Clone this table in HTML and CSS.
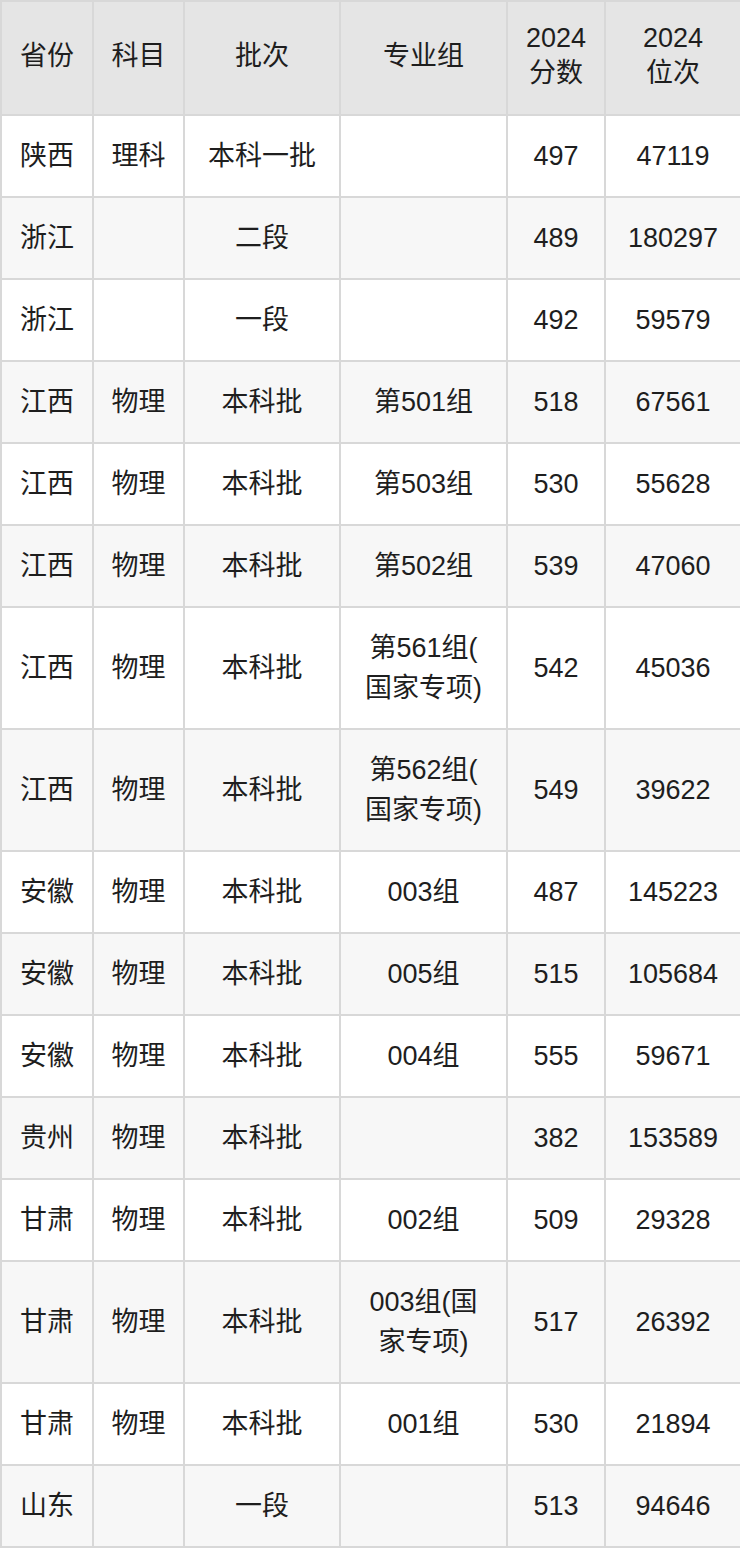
FILE: index.html
```html
<!DOCTYPE html>
<html lang="zh-CN">
<head>
<meta charset="utf-8">
<title>2024 分数位次</title>
<link rel="stylesheet" href="styles.css">
</head>
<body>
<table class="score-table">
  <colgroup>
    <col class="c1"><col class="c2"><col class="c3"><col class="c4"><col class="c5"><col class="c6">
  </colgroup>
  <thead>
    <tr><th>省份</th><th>科目</th><th>批次</th><th>专业组</th><th>2024<br>分数</th><th>2024<br>位次</th></tr>
  </thead>
  <tbody>
    <tr><td>陕西</td><td>理科</td><td>本科一批</td><td class="group"></td><td>497</td><td>47119</td></tr>
    <tr><td>浙江</td><td></td><td>二段</td><td class="group"></td><td>489</td><td>180297</td></tr>
    <tr><td>浙江</td><td></td><td>一段</td><td class="group"></td><td>492</td><td>59579</td></tr>
    <tr><td>江西</td><td>物理</td><td>本科批</td><td class="group">第501组</td><td>518</td><td>67561</td></tr>
    <tr><td>江西</td><td>物理</td><td>本科批</td><td class="group">第503组</td><td>530</td><td>55628</td></tr>
    <tr><td>江西</td><td>物理</td><td>本科批</td><td class="group">第502组</td><td>539</td><td>47060</td></tr>
    <tr><td>江西</td><td>物理</td><td>本科批</td><td class="group">第561组(国家专项)</td><td>542</td><td>45036</td></tr>
    <tr><td>江西</td><td>物理</td><td>本科批</td><td class="group">第562组(国家专项)</td><td>549</td><td>39622</td></tr>
    <tr><td>安徽</td><td>物理</td><td>本科批</td><td class="group">003组</td><td>487</td><td>145223</td></tr>
    <tr><td>安徽</td><td>物理</td><td>本科批</td><td class="group">005组</td><td>515</td><td>105684</td></tr>
    <tr><td>安徽</td><td>物理</td><td>本科批</td><td class="group">004组</td><td>555</td><td>59671</td></tr>
    <tr><td>贵州</td><td>物理</td><td>本科批</td><td class="group"></td><td>382</td><td>153589</td></tr>
    <tr><td>甘肃</td><td>物理</td><td>本科批</td><td class="group">002组</td><td>509</td><td>29328</td></tr>
    <tr><td>甘肃</td><td>物理</td><td>本科批</td><td class="group">003组(国家专项)</td><td>517</td><td>26392</td></tr>
    <tr><td>甘肃</td><td>物理</td><td>本科批</td><td class="group">001组</td><td>530</td><td>21894</td></tr>
    <tr><td>山东</td><td></td><td>一段</td><td class="group"></td><td>513</td><td>94646</td></tr>
  </tbody>
</table>
</body>
</html>
```
FILE: styles.css
```css
html, body {
  margin: 0;
  padding: 0;
  background: #ffffff;
}
.score-table {
  width: 740px;
  border-collapse: collapse;
  table-layout: fixed;
  font-family: "Liberation Sans", "Noto Sans CJK SC", sans-serif;
  font-size: 27px;
  color: #1e1e1e;
}
.c1 { width: 92px; }
.c2 { width: 91px; }
.c3 { width: 156px; }
.c4 { width: 167px; }
.c5 { width: 98px; }
.c6 { width: 136px; }
.score-table th,
.score-table td {
  border: 2px solid #d8d8d8;
  text-align: center;
  vertical-align: middle;
  padding-left: 6px;
  padding-right: 6px;
}
.score-table th {
  background: #e5e5e5;
  font-weight: normal;
  line-height: 35px;
  padding-top: 19px;
  padding-bottom: 23px;
}
.score-table td {
  line-height: 40px;
  padding-top: 20px;
  padding-bottom: 20px;
}
.score-table td.group {
  padding-left: 20px;
  padding-right: 20px;
  line-break: anywhere;
}
.score-table tbody tr:nth-child(even) td {
  background: #f7f7f7;
}
```
